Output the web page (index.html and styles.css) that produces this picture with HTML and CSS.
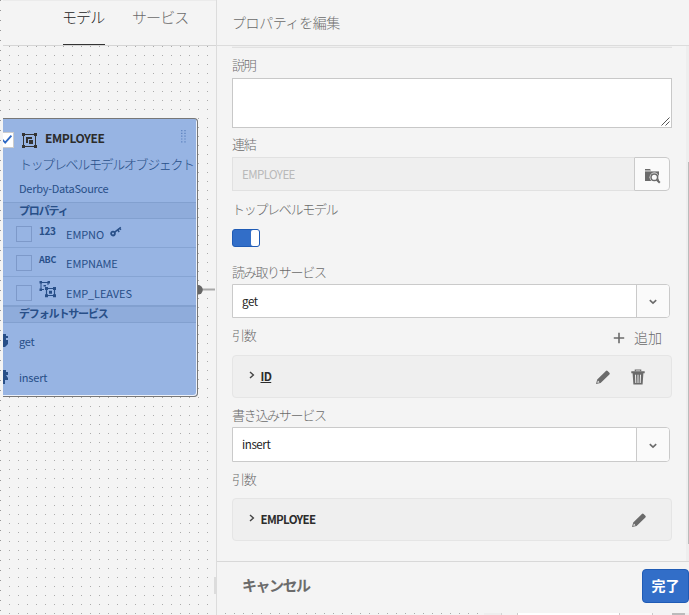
FILE: index.html
```
<!DOCTYPE html>
<html lang="ja">
<head>
<meta charset="utf-8">
<title>プロパティを編集</title>
<link rel="stylesheet" href="styles.css">
</head>
<body>
<svg class="defs" width="0" height="0">
  <symbol id="pencil" viewBox="0 0 16 16"><path d="M1 15 2.2 10.6 10.9 2a1.2 1.2 0 0 1 1.7 0L14.4 3.7a1.2 1.2 0 0 1 0 1.7L5.6 14Z" fill="#6b6b6b"/><path d="m2.9 11.5 1.6 1.7-2.2.8Z" fill="#efefef"/></symbol>
  <symbol id="down" viewBox="0 0 8 6"><path d="m.8 1.2 3.2 3 3.2-3" fill="none" stroke="#6b6b6b" stroke-width="1.6"/></symbol>
  <symbol id="right" viewBox="0 0 6 8"><path d="m1 .9 3.4 3.1L1 7.1" fill="none" stroke="#444" stroke-width="1.4"/></symbol>
</svg>
<div class="app">
  <div class="edge"></div>
  <main class="workspace">
    <nav class="tabs"><span class="tab active">モデル</span><span class="tab">サービス</span></nav>
    <div class="canvas">
      <section class="card">
        <div class="card-head">
          <span class="check"><svg width="11" height="14" viewBox="0 0 11 14"><path d="M-1 6.2 2.2 9.6 8.4 2.6" fill="none" stroke="#2d68c4" stroke-width="1.8"/></svg></span>
          <svg class="object" width="15" height="15" viewBox="0 0 15 15"><path d="M1.5 1.5h12v12h-12Z" fill="none" stroke="#333" stroke-width="1"/><path d="M0 0h3v3H0Zm12 0h3v3h-3ZM0 12h3v3H0Zm12 0h3v3h-3ZM4 4h6v2H6v4H4Z" fill="#333"/><path d="M7 7h4v4H7Z" fill="#333"/></svg>
          <b>EMPLOYEE</b>
          <svg class="grip" width="5" height="13" viewBox="0 0 5 13"><path d="M.8 0v13M4 0v13" stroke="#5179b9" stroke-width="1.1" stroke-dasharray="1.2 1.6"/></svg>
        </div>
        <div class="card-type">トップレベルモデルオブジェクト</div>
        <div class="card-source">Derby-DataSource</div>
        <div class="band">プロパティ</div>
        <div class="prop"><i></i><b class="kind num">123</b><span>EMPNO</span>
          <svg class="key" width="12" height="11" viewBox="0 0 12 11"><circle cx="3" cy="7.6" r="1.9" fill="none" stroke="#284f88" stroke-width="1.8"/><path d="m4.4 6.4 6.4-5M7.6 3.8 9.2 6M9.5 2.3l1.4 1.5" fill="none" stroke="#284f88" stroke-width="1.5"/></svg></div>
        <div class="prop"><i></i><b class="kind">ABC</b><span>EMPNAME</span></div>
        <div class="prop last"><i></i>
          <svg class="kind-icon" width="18" height="17" viewBox="0 0 18 17"><path d="M5 8.5H2V1.5h7V4" fill="none" stroke="#284f88" stroke-width="1"/><path d="M.5 0h2.5v2.5H.5Zm8 0H11v2.5H8.500ZM.5 7.500H3V10H.5ZM4.500 4H7v1.500H4.500Z" fill="#284f88"/><path d="M7.500 7.500h8v7h-8Z" fill="none" stroke="#284f88" stroke-width="1.200"/><path d="M6 6h3v3H6Zm8 0h3v3h-3Zm-8 7.300h3v3H6Zm8 0h3v3h-3ZM10 9.700h3v3h-3Z" fill="#284f88"/></svg>
          <span>EMP_LEAVES</span></div>
        <div class="band second">デフォルトサービス</div>
        <div class="service"><svg width="6" height="16" viewBox="0 0 6 16"><path d="M0 1h3v2h2v2H3v2h2v4l-3 3H0Z" fill="#284f88"/></svg><span>get</span></div>
        <div class="service"><svg width="6" height="16" viewBox="0 0 6 16"><path d="M0 1h3v2h2v3H3l2 3v2H2v4H0Z" fill="#284f88"/></svg><span>insert</span></div>
      </section>
      <svg class="link" width="17" height="10" viewBox="0 0 17 10"><path d="M4 4.500h15" stroke="#a8a8a8" stroke-width="2"/><path d="M0 0a4.700 4.700 0 0 1 0 9.600Z" fill="#666"/></svg>
    </div>
    <div class="resizer"></div>
  </main>
  <aside class="panel">
    <header>プロパティを編集</header>
    <div class="form">
      <div class="prev-field"></div>
      <label class="l-desc">説明</label>
      <div class="textarea"><svg width="9" height="9" viewBox="0 0 9 9"><path d="M.5 8.5 8.5.5M4.5 8.5l4-4" stroke="#555" stroke-width="1"/></svg></div>
      <label class="l-bind">連結</label>
      <div class="field path"><span>EMPLOYEE</span><button><svg width="17" height="16" viewBox="0 0 17 16"><path d="M1 1h5l1 1.400H1Z" fill="#6b6b6b"/><path d="M1 3.400h14V13H1Z" fill="#6b6b6b"/><circle cx="10.300" cy="9.300" r="4.700" fill="#fafafa"/><circle cx="10.300" cy="9.300" r="3.300" fill="#fafafa" stroke="#6b6b6b" stroke-width="1.500"/><path d="m12.800 11.800 3 3" stroke="#6b6b6b" stroke-width="2"/></svg></button></div>
      <label class="l-top">トップレベルモデル</label>
      <div class="switch"><i></i></div>
      <label class="l-read">読み取りサービス</label>
      <div class="field select"><span>get</span><button><svg width="8" height="6"><use href="#down"/></svg></button></div>
      <div class="args"><label>引数</label><span class="add"><svg width="12" height="12" viewBox="0 0 12 12"><path d="M6 .8v10.400M.8 6h10.400" stroke="#6b6b6b" stroke-width="1.600"/></svg><span>追加</span></span></div>
      <div class="item"><svg width="6" height="8"><use href="#right"/></svg><b class="underlined">ID</b>
        <svg class="edit" width="16" height="16"><use href="#pencil"/></svg>
        <svg class="trash" width="14" height="16" viewBox="0 0 14 16"><path d="M4.300 2.300V1h5.400v1.300" fill="none" stroke="#6b6b6b" stroke-width="1.200"/><path d="M.3 2.300h13.400v2H.3ZM1.600 4.300h10.800L11.600 15.500H2.400Z" fill="#6b6b6b"/><path d="m4.500 5.700.3 8.300M7 5.700V14m2.500-8.300L9.200 14" stroke="#efefef" stroke-width="1"/></svg></div>
      <label class="l-write">書き込みサービス</label>
      <div class="field select tall"><span>insert</span><button><svg width="8" height="6"><use href="#down"/></svg></button></div>
      <label class="l-args">引数</label>
      <div class="item"><svg width="6" height="8"><use href="#right"/></svg><b>EMPLOYEE</b><svg class="edit" width="16" height="16"><use href="#pencil"/></svg></div>
      <div class="scroll"><i></i></div>
    </div>
    <footer><span class="cancel">キャンセル</span><button class="done">完了</button></footer>
    <div class="under"><i></i></div>
  </aside>
</div>
</body>
</html>
```
FILE: styles.css
```
* { box-sizing: border-box; }
body { margin: 0; background: #f4f4f4; font-family: "Noto Sans CJK JP", "Noto Sans", sans-serif; font-size: 12px; color: #6b6b6b; overflow: hidden; }
button { font: inherit; padding: 0; }
svg { display: block; flex: none; }
.defs { position: absolute; }
.app { display: flex; width: 689px; height: 615px; }
.edge { width: 3px; background: conic-gradient(from 270deg at 1px 1px, #999 90deg, transparent 0) 0 0 / 10px 10px; }
.workspace { width: 213px; position: relative; display: flex; flex-direction: column; }
.tabs { height: 46px; display: flex; gap: 28px; padding-left: 60px; border-bottom: 1px solid #d5d5d5; border-top: 1px solid #ebebeb; }
.tab { height: 44px; line-height: 31px; font-size: 15px; letter-spacing: -.9px; font-weight: 300; white-space: nowrap; text-indent: -1px; }
.tab.active { width: 42px; color: #222; border-bottom: 1px solid #333; }
.canvas { flex: 1; position: relative; background: conic-gradient(from 270deg at 1px 1px, #aaa 90deg, transparent 0) 6px 0 / 9px 9px; margin-right: 2px; }
.card { position: absolute; left: 0; top: 72px; width: 195px; height: 279px; overflow: hidden; background: #97b4e3; border: 1px solid #777; border-left: 0; border-radius: 0 4px 4px 0; box-shadow: inset -1px -1px #eef2fa; color: #284f88; }
.card-head { height: 34px; display: flex; align-items: flex-start; color: #2c2c2c; }
.check { width: 11px; height: 16px; margin-top: 13px; background: #fff; border: 1px solid #ccc; border-left: 0; }
.object { margin: 14px 8px 0 8px; }
.card-head b { line-height: 17px; margin-top: 10px; width: 130px; font-size: 12px; letter-spacing: -.4px; }
.grip { margin: 11px 0 0 6px; }
.card-type { margin-left: 17px; height: 24px; line-height: 21px; font-size: 13px; letter-spacing: -1.35px; font-weight: 300; white-space: nowrap; text-indent: -1px; }
.card-source { margin-left: 16px; height: 25px; line-height: 22px; font-size: 11px; letter-spacing: -.25px; }
.band { height: 17px; background: #8facdb; border-top: 1px solid #82a0cf; border-bottom: 1px solid #82a0cf; padding-left: 16px; line-height: 14px; font-size: 11px; letter-spacing: -1.15px; font-weight: 700; width: 193px; }
.band.second { height: 18px; margin-top: -1px; border-top-width: 2px; line-height: 13px; }
.prop { height: 29px; display: flex; align-items: center; width: 193px; border-bottom: 1px solid #86a4d3; padding-left: 13px; }
.prop.last { border: 0; }
.prop i { width: 16px; height: 16px; border: 1px solid #7d99c9; margin-top: 2px; }
.kind { width: 27px; margin-left: 7px; margin-right: 1px; line-height: 14px; margin-top: -4px; font-size: 9px; letter-spacing: -.25px; }
.kind.num { font-size: 10px; letter-spacing: -.4px; }
.kind-icon { margin: -4px 10px 0 7px; }
.prop span { font-size: 11px; margin-top: 2px; margin-left: -1px; line-height: 18px; letter-spacing: -.1px; }
.key { margin: -3px 0 0 6px; }
.service { height: 36px; display: flex; align-items: center; }
.service svg { margin-right: 10px; }
.service span { font-size: 11px; line-height: 18px; letter-spacing: -.2px; }
.link { position: absolute; left: 195px; top: 239px; }
.resizer { position: absolute; right: 0; top: 577px; width: 2px; height: 17px; background: #dcdcdc; }
.panel { width: 473px; display: flex; flex-direction: column; border-left: 1px solid #dcdcdc; background: #f4f4f4; }
header { height: 46px; border-bottom: 1px solid #dcdcdc; padding-left: 15px; line-height: 45px; font-size: 14px; letter-spacing: -.4px; font-weight: 300; }
.form { position: relative; height: 515px; padding-left: 15px; display: flex; flex-direction: column; align-items: flex-start; }
.prev-field { width: 440px; height: 2px; border-bottom: 1px solid #e1e1e1; background: #efefef; }
.form label { font-size: 13px; letter-spacing: -1.3px; line-height: 17px; height: 18px; font-weight: 300; display: block; }
.l-desc { margin: 8px 0 4px; }
.textarea { width: 440px; height: 50px; border: 1px solid #c8c8c8; background: #fff; display: flex; align-items: flex-end; justify-content: flex-end; padding: 1px; }
.l-bind { margin: 7px 0 4px; }
.field { display: flex; width: 438px; height: 34px; border: 1px solid #cacaca; border-radius: 0 4px 4px 0; background: #fff; color: #222; }
.field span { flex: 1; padding-left: 9px; line-height: 33px; font-size: 11.5px; letter-spacing: -.4px; }
.field button { width: 33px; border: 0; border-left: 1px solid #cacaca; border-radius: 0 3px 3px 0; background: #fafafa; display: flex; align-items: center; justify-content: center; }
.field.path { border: 0; }
.path span { background: #efefef; border: 1px solid #e1e1e1; border-right: 0; color: #b9b9b9; letter-spacing: -.55px; }
.path button { width: 36px; border: 1px solid #cacaca; border-radius: 0 4px 4px 0; padding-top: 4px; }
.select.tall { height: 35px; }
.select button { padding-top: 2px; }
.l-top { margin: 9px 0 11px; }
.switch { width: 28px; height: 18px; border: 1px solid #1f5bb5; border-radius: 3px; background: #326ec8; display: flex; justify-content: flex-end; }
.switch i { width: 8px; background: #fff; border-radius: 2px; }
.l-read { margin: 16px 0 3px; }
.args { width: 430px; height: 37px; padding-top: 8px; display: flex; justify-content: space-between; }
.add { display: flex; align-items: center; gap: 9px; height: 24px; font-size: 14px; font-weight: 300; }
.add span { margin-top: -2px; }
.item { width: 440px; height: 43px; border: 1px solid #e5e5e5; border-radius: 4px; background: #efefef; display: flex; align-items: center; padding: 0 24px 0 16px; color: #2c2c2c; }
.item > svg:first-child { margin: -3px 6px 0 0; }
.item b { flex: 1; font-size: 11.5px; font-weight: 600; letter-spacing: -.65px; line-height: 17px; text-indent: -.5px; }
.underlined { text-decoration: underline; }
.edit + .trash { margin: 0 2px 0 20px; }
.l-write { margin: 8px 0 3px; }
.l-args { margin: 8px 0 10px; }
.scroll { position: absolute; right: 0; top: 0; width: 3px; height: 515px; background: #eee; padding: 116px 0 0 2px; }
.scroll i { display: block; height: 382px; background: #bbb; }
footer { height: 52px; border-top: 1px solid #d8d8d8; display: flex; justify-content: space-between; padding: 7px 0 0 25px; }
.cancel { font-size: 15px; letter-spacing: -1.5px; font-weight: 600; line-height: 32px; }
.done { width: 47px; height: 34px; border: 1px solid #1f5bb5; border-radius: 4px; background: #326ec8; color: #fff; font-size: 14px; font-weight: 700; line-height: 30px; padding-bottom: 2px; }
.under { height: 2px; background: conic-gradient(from 270deg at 1px 1px, #aaa 90deg, transparent 0) 8px 0 / 9px 9px; padding-left: 267px; }
.under i { display: block; height: 2px; background: linear-gradient(90deg, #eee 0 17px, #d5d5d5 17px 18px, #f4f4f4 18px 33px, #ccc 33px 34px, #fff 34px 135px, #ccc 135px 136px, #fafafa 136px 168px, #ccc 168px 169px, #f4f4f4 169px 188px, #bbb 188px 201px, #eee 201px); }
```
